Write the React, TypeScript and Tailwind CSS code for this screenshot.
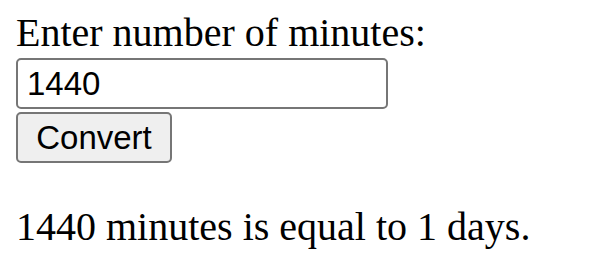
import { useState } from "react";

function minutesToDays(minutes: number) {
  return Math.floor(minutes / 1440);
}

export default function App() {
  const [minutes, setMinutes] = useState("1440");
  const [result, setResult] = useState<string>("1440 minutes is equal to 1 days.");

  const handleConvert = () => {
    const value = parseInt(minutes, 10) || 0;
    setResult(`${value} minutes is equal to ${minutesToDays(value)} days.`);
  };

  return (
    <div className="min-h-screen bg-white pl-[16px] pt-[11px] text-black">
      <label
        htmlFor="minutes"
        className="block font-['Liberation_Serif',serif] text-[40px] leading-[44px]"
      >
        Enter number of minutes:
      </label>
      <input
        id="minutes"
        type="text"
        value={minutes}
        onChange={(event) => setMinutes(event.target.value)}
        className="mt-[3px] block h-[51px] w-[372px] rounded-[5px] border-2 border-[#767676] bg-white px-[9px] font-['Liberation_Sans',Arial,sans-serif] text-[33px] text-black outline-none"
      />
      <button
        type="button"
        onClick={handleConvert}
        className="mt-[3px] block h-[51px] w-[156px] rounded-[5px] border-2 border-[#767676] bg-[#efefef] font-['Liberation_Sans',Arial,sans-serif] text-[33px] leading-none text-black"
      >
        Convert
      </button>
      <p className="mt-[42px] font-['Liberation_Serif',serif] text-[40px] leading-[44px]">
        {result}
      </p>
    </div>
  );
}
